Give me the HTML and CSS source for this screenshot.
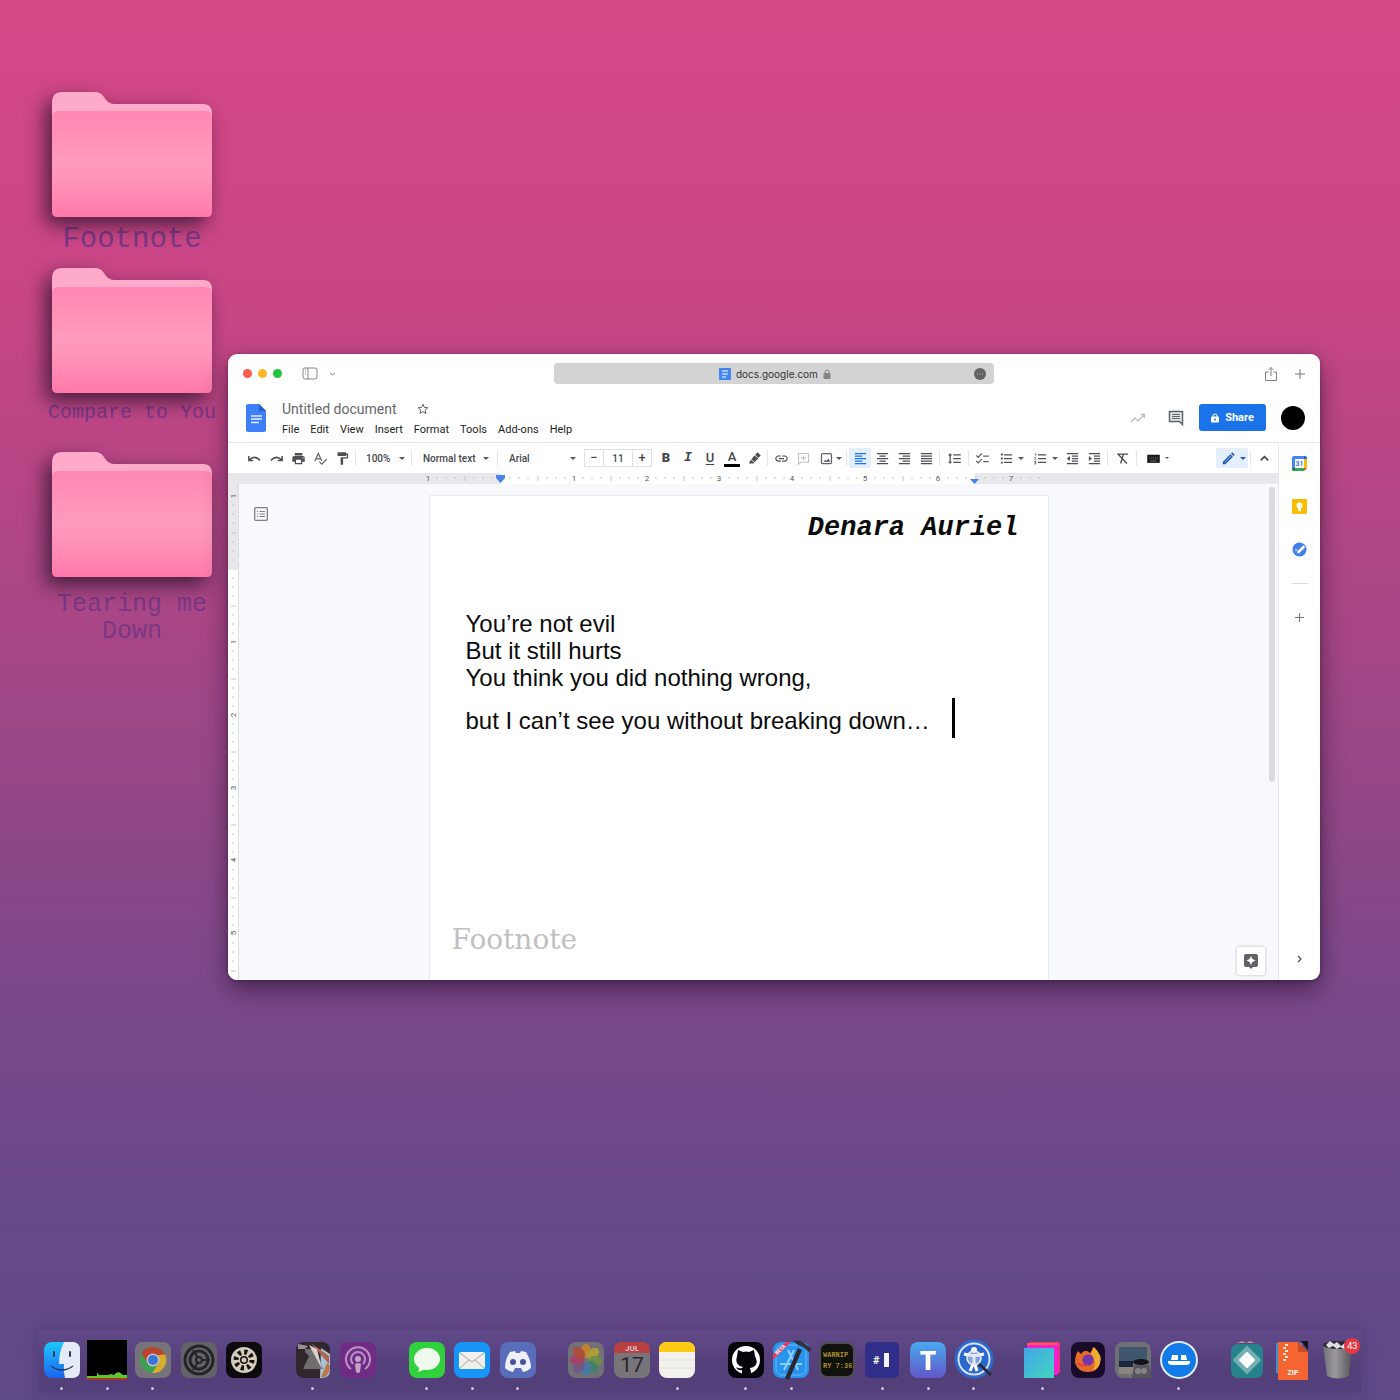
FILE: index.html
```html
<!DOCTYPE html>
<html lang="en">
<head>
<meta charset="utf-8">
<title>Desktop</title>
<meta name="viewport" content="width=device-width, initial-scale=1">
<link rel="stylesheet" href="styles.css">
</head>
<body>
<svg class="defs" width="0" height="0" aria-hidden="true">
  <defs>
    <linearGradient id="front" x1="0" y1="0" x2="0" y2="1"><stop offset="0" stop-color="#ff87b3"/><stop offset=".48" stop-color="#ff9abe"/><stop offset=".65" stop-color="#ff94ba"/><stop offset="1" stop-color="#ff79aa"/></linearGradient>
    <symbol id="folder" viewBox="0 0 160 125">
      <path d="M0 11Q0 0 10 0H43Q49 0 52 5Q56 12 62 12H151Q160 12 160 21V60H0Z" fill="#ffa9cb"/>
      <path d="M0 25Q0 19 7 19H153Q160 19 160 25V120Q160 125 155 125H5Q0 125 0 120Z" fill="url(#front)"/>
    </symbol>
    <pattern id="ticks-h" x="0" y="0" width="73" height="11" patternUnits="userSpaceOnUse">
      <path d="M9 4v2M18 4v2M27 4v2M37 3v5M46 4v2M55 4v2M64 4v2" stroke="#c3c6ca" fill="none"/>
    </pattern>
    <pattern id="ticks-v" x="0" y="12" width="10" height="73" patternUnits="userSpaceOnUse">
      <path d="M4 9h2M4 18h2M4 27h2M3 37h5M4 46h2M4 55h2M4 64h2" stroke="#c3c6ca" fill="none"/>
    </pattern>
  </defs>
</svg>
<main class="desktop">
  <nav class="folders" aria-label="Folders">
    <a class="folder" href="#footnote"><svg class="folder-icon"><use href="#folder"/></svg><span class="folder-label large">Footnote</span></a>
    <a class="folder" href="#compare"><svg class="folder-icon"><use href="#folder"/></svg><span class="folder-label small">Compare to You</span></a>
    <a class="folder" href="#tearing"><svg class="folder-icon"><use href="#folder"/></svg><span class="folder-label medium">Tearing me Down</span></a>
  </nav>

  <section class="window" aria-label="Document window">
    <header class="titlebar">
      <div class="bar-left">
        <button class="light red" aria-label="Close"></button>
        <button class="light yellow" aria-label="Minimize"></button>
        <button class="light green" aria-label="Zoom"></button>
        <button class="plain sidebar-btn" aria-label="Sidebar"><svg width="16" height="13" viewBox="0 0 16 13" fill="none" stroke="#858585"><rect x="1" y="1" width="14" height="11" rx="2"/><path d="M6 1v11M3 3h1M3 5h1M3 7h1"/></svg></button>
        <button class="plain" aria-label="Tab groups"><svg width="8" height="6" viewBox="0 0 8 6" fill="none" stroke="#888"><path d="M2 2l2.500 2L7 2"/></svg></button>
      </div>
      <div class="address">
        <svg width="12" height="12" viewBox="0 0 12 12"><rect width="12" height="12" rx="1" fill="#4285f4"/><path d="M3 3h6M3 6h6M3 9h4" stroke="#fff"/></svg>
        <input class="url" aria-label="Address" value="docs.google.com">
        <svg width="8" height="10" viewBox="0 0 8 10"><rect x="0.500" y="4" width="7" height="6" rx="1" fill="#858585"/><path d="M2 5V3q0-2 2-2t2 2v2" stroke="#858585" fill="none"/></svg>
        <button class="plain more" aria-label="More"><svg width="12" height="12" viewBox="0 0 12 12"><circle cx="6" cy="6" r="6" fill="#626262"/><path d="M3 6h1M5.500 6h1M8 6h1" stroke="#bbb"/></svg></button>
      </div>
      <div class="bar-right">
        <button class="plain" aria-label="Share page"><svg width="14" height="16" viewBox="0 0 14 16" fill="none" stroke="#808080"><path d="M4.500 6H1.500v8.500h11V6H9.500M7 10V1.500M4.500 4L7 1.500 9.500 4"/></svg></button>
        <button class="plain" aria-label="New tab"><svg width="12" height="12" viewBox="0 0 12 12" stroke="#777"><path d="M6 1v10M1 6h10"/></svg></button>
      </div>
    </header>

    <div class="doc-header">
      <svg class="docs-logo" width="20" height="28" viewBox="0 0 20 28"><path d="M2 0H13L20 7V26q0 2-2 2H2q-2 0-2-2V2Q0 0 2 0Z" fill="#3d7ff8"/><path d="M13 0l7 7h-7z" fill="#1f5fc4"/><path d="M5 12h11M5 15h11M5 18.500h8" stroke="#e4edff" stroke-width="1.600"/></svg>
      <div class="doc-names">
        <div class="title-row">
          <input class="doc-title" aria-label="Title" value="Untitled document">
          <button class="plain" aria-label="Star"><svg width="12" height="12" viewBox="0 0 12 12" fill="none" stroke="#5f6368"><path d="M6 1.200l1.400 3.200 3.500.3-2.700 2.300.8 3.500-3-1.900-3 1.900.8-3.500L1.100 4.700l3.500-.3z"/></svg></button>
        </div>
        <nav class="menus" aria-label="Menu">
          <button>File</button><button>Edit</button><button>View</button><button>Insert</button><button>Format</button><button>Tools</button><button>Add-ons</button><button>Help</button>
        </nav>
      </div>
      <div class="doc-actions">
        <button class="plain" aria-label="Activity"><svg width="16" height="12" viewBox="0 0 16 12" fill="none" stroke="#bdbfc2" stroke-width="1.300"><path d="M1 10l4-4 3 3 6-6M11 2.500h3.500V6"/></svg></button>
        <button class="plain comments" aria-label="Comments"><svg width="16" height="16" viewBox="0 0 16 16"><path d="M1.500 1.500h13v13l-3-3h-10z" fill="#e6e7e8" stroke="#5f6368" stroke-width="1.500"/><path d="M4 4.500h8M4 6.500h8M4 8.500h8" stroke="#5f6368"/></svg></button>
        <button class="share"><svg width="8" height="10" viewBox="0 0 8 10"><rect y="3.500" width="8" height="6" rx="1" fill="#fff"/><path d="M2 4V3q0-2 2-2t2 2v1" stroke="#fff" fill="none"/><circle cx="4" cy="6.500" r="1" fill="#1a73e8"/></svg>Share</button>
        <button class="avatar" aria-label="Account"></button>
      </div>
    </div>

    <div class="workspace">
      <div class="editor">
        <div class="toolbar" role="toolbar" aria-label="Formatting">
          <button class="tool" aria-label="Undo"><svg class="ico" viewBox="0 0 24 24"><path d="M3 8v7h7M4 14q8-8 17 1" fill="none" stroke="#4c4f53" stroke-width="2.400"/></svg></button>
          <button class="tool" aria-label="Redo"><svg class="ico" viewBox="0 0 24 24"><path d="M21 8v7h-7M20 14q-8-8-17 1" fill="none" stroke="#4c4f53" stroke-width="2.400"/></svg></button>
          <button class="tool" aria-label="Print"><svg class="ico" viewBox="0 0 24 24"><path d="M19 8H5c-1.660 0-3 1.340-3 3v6h4v4h12v-4h4v-6c0-1.660-1.340-3-3-3zm-3 11H8v-5h8v5zm3-7c-.55 0-1-.45-1-1s.45-1 1-1 1 .45 1 1-.45 1-1 1zm-1-9H6v4h12V3z"/></svg></button>
          <button class="tool" aria-label="Spelling"><svg class="ico" viewBox="0 0 24 24"><path d="M3 16L8.500 4 14 16M5 12.500h7M10 17l4 4 8-8" fill="none" stroke="#5f6368" stroke-width="2"/></svg></button>
          <button class="tool" aria-label="Paint format"><svg class="ico" viewBox="0 0 24 24"><path d="M18 4V3c0-.55-.45-1-1-1H5c-.55 0-1 .45-1 1v4c0 .55.45 1 1 1h12c.55 0 1-.45 1-1V6h1v4H9v11c0 .55.45 1 1 1h2c.55 0 1-.45 1-1v-9h8V4h-3z"/></svg></button>
          <i class="sep"></i>
          <label class="picker zoom"><select aria-label="Zoom"><option>100%</option></select></label>
          <i class="sep"></i>
          <label class="picker style"><select aria-label="Style"><option>Normal text</option></select></label>
          <i class="sep"></i>
          <label class="picker font"><select aria-label="Font"><option>Arial</option></select></label>
          <div class="size-box"><button aria-label="Smaller">−</button><input aria-label="Font size" value="11"><button aria-label="Larger">+</button></div>
          <button class="tool letter bold">B</button>
          <button class="tool letter italic">I</button>
          <button class="tool letter underline">U</button>
          <button class="tool letter color">A</button>
          <button class="tool" aria-label="Highlight"><svg class="ico" viewBox="0 0 24 24"><path d="M3 20l3-6 6 5-2 1zM7 13l5-6 6 5-6 6zM13 6l4-4 5 5-4 4z"/></svg></button>
          <i class="sep"></i>
          <button class="tool" aria-label="Link"><svg class="ico" viewBox="0 0 24 24"><path d="M3.900 12c0-1.710 1.390-3.100 3.100-3.100h4V7H7c-2.760 0-5 2.240-5 5s2.240 5 5 5h4v-1.900H7c-1.710 0-3.100-1.390-3.100-3.100zM8 13h8v-2H8v2zm9-6h-4v1.900h4c1.710 0 3.100 1.390 3.100 3.100s-1.390 3.100-3.100 3.100h-4V17h4c2.760 0 5-2.240 5-5s-2.240-5-5-5z"/></svg></button>
          <button class="tool" aria-label="Add comment"><svg class="ico" viewBox="0 0 24 24"><path d="M4 4h16v14H8l-4 3zM12 7v8M8 11h8" fill="none" stroke="#c0c2c5" stroke-width="1.800"/></svg></button>
          <button class="tool drop narrow" aria-label="Image"><svg class="ico" viewBox="0 0 24 24"><rect x="4" y="4" width="16" height="16" rx="2" fill="none" stroke="#5f6368" stroke-width="2"/><path d="M7 17l3-3 2 2 3-4 3 5z"/></svg></button>
          <i class="sep"></i>
          <button class="tool active" aria-label="Align left"><svg class="ico" viewBox="0 0 24 24"><path d="M3 3h18v2H3zM3 7h12v2H3zM3 11h18v2H3zM3 15h12v2H3zM3 19h18v2H3z"/></svg></button>
          <button class="tool" aria-label="Align center"><svg class="ico" viewBox="0 0 24 24"><path d="M3 3h18v2H3zM7 7h10v2H7zM3 11h18v2H3zM7 15h10v2H7zM3 19h18v2H3z"/></svg></button>
          <button class="tool" aria-label="Align right"><svg class="ico" viewBox="0 0 24 24"><path d="M3 3h18v2H3zM9 7h12v2H9zM3 11h18v2H3zM9 15h12v2H9zM3 19h18v2H3z"/></svg></button>
          <button class="tool" aria-label="Justify"><svg class="ico" viewBox="0 0 24 24"><path d="M3 3h18v2H3zM3 7h18v2H3zM3 11h18v2H3zM3 15h18v2H3zM3 19h18v2H3z"/></svg></button>
          <i class="sep"></i>
          <button class="tool wide" aria-label="Line spacing"><svg class="ico" viewBox="0 0 24 24"><path d="M6 7h2.500L5 3.500 1.500 7H4v10H1.500L5 20.500 8.500 17H6V7zm4-2v2h12V5H10zm0 14h12v-2H10v2zm0-6h12v-2H10v2z"/></svg></button>
          <i class="sep"></i>
          <button class="tool" aria-label="Checklist"><svg class="ico" viewBox="0 0 24 24"><path d="M2 7l3 3 6-6M2 16l3 3 6-6M13 8h9M13 17h9" fill="none" stroke="#5f6368" stroke-width="2"/></svg></button>
          <button class="tool drop" aria-label="Bulleted list"><svg class="ico" viewBox="0 0 24 24"><path d="M3 4h3v3H3zM3 10.500h3v3H3zM3 17h3v3H3zM8 5h13v2H8zM8 11h13v2H8zM8 17h13v2H8z"/></svg></button>
          <button class="tool drop" aria-label="Numbered list"><svg class="ico" viewBox="0 0 24 24"><path d="M3 4h2v4H4V5H3zM2 10h3v1l-2 2h2v1H2v-1l2-2H2zM2 16h3v5H2v-1h2v-1H3v-1h1v-1H2zM8 5h13v2H8zM8 11h13v2H8zM8 17h13v2H8z"/></svg></button>
          <button class="tool" aria-label="Decrease indent"><svg class="ico" viewBox="0 0 24 24"><path d="M3 3h18v2H3zM11 7h10v2H11zM11 11h10v2H11zM11 15h10v2H11zM3 19h18v2H3zM3 12l5-4v8z"/></svg></button>
          <button class="tool" aria-label="Increase indent"><svg class="ico" viewBox="0 0 24 24"><path d="M3 3h18v2H3zM11 7h10v2H11zM11 11h10v2H11zM11 15h10v2H11zM3 19h18v2H3zM8 12L3 8v8z"/></svg></button>
          <i class="sep"></i>
          <button class="tool wide" aria-label="Clear formatting"><svg class="ico" viewBox="0 0 24 24"><path d="M6 5h15M13.500 5L9 20M4 4l15 16" fill="none" stroke="#4c4f53" stroke-width="2.200"/></svg></button>
          <i class="sep"></i>
          <button class="tool drop faint" aria-label="Input tools"><svg class="ico" viewBox="0 0 24 24"><rect x="2" y="6" width="20" height="13" fill="#161616"/><path d="M5 10h14M5 12.500h14" stroke="#777" stroke-dasharray="2 1"/><path d="M7 16h10" stroke="#aaa"/></svg></button>
          <button class="tool mode" aria-label="Editing mode"><svg class="ico" viewBox="0 0 24 24"><path d="M3 21v-4L15 5l4 4L7 21zM16 4l2-2 4 4-2 2z"/><path d="M6 18L16 8" stroke="#8ab4f8" stroke-width="1.500"/></svg></button>
          <i class="sep"></i>
          <button class="tool" aria-label="Hide menus"><svg class="ico" viewBox="0 0 24 24"><path d="M6 15l6-6 6 6" fill="none" stroke="#444" stroke-width="2.400"/></svg></button>
        </div>

        <div class="ruler-row">
          <svg class="ruler" width="620" height="11" viewBox="0 0 620 11">
            <rect x="73" width="474" height="11" fill="#fff"/>
            <rect width="620" height="11" fill="url(#ticks-h)"/>
            <g class="ruler-num"><text x="0" y="8">1</text><text x="146" y="8">1</text><text x="219" y="8">2</text><text x="291" y="8">3</text><text x="364" y="8">4</text><text x="437" y="8">5</text><text x="510" y="8">6</text><text x="583" y="8">7</text></g>
            <path d="M68 2h9v3l-4.500 5L68 5z" fill="#4a80ee"/><path d="M542 6h9l-4.500 5z" fill="#4a80ee"/>
          </svg>
        </div>

        <div class="stage">
          <svg class="ruler-v" width="10" height="496" viewBox="0 0 10 496">
            <rect width="10" height="496" fill="#fff"/><rect width="10" height="86" fill="#e8e8eb"/>
            <rect y="12" width="10" height="484" fill="url(#ticks-v)"/>
            <g class="ruler-num"><text transform="translate(8 12) rotate(-90)">1</text><text transform="translate(8 158) rotate(-90)">1</text><text transform="translate(8 231) rotate(-90)">2</text><text transform="translate(8 304) rotate(-90)">3</text><text transform="translate(8 376) rotate(-90)">4</text><text transform="translate(8 449) rotate(-90)">5</text></g>
          </svg>
          <div class="canvas">
            <div class="outline">
              <button class="plain" aria-label="Outline"><svg width="14" height="14" viewBox="0 0 14 14" fill="none" stroke="#7d8187"><rect x=".7" y=".7" width="12.600" height="12.600" rx="1" stroke-width="1.300"/><path d="M3 4.500h1M3 7h1M3 9.500h1M5.500 4.500H11M5.500 7H11M5.500 9.500H11"/></svg></button>
            </div>
            <article class="paper">
              <p class="byline">Denara Auriel</p>
              <div class="verse">
                <p>You’re not evil</p>
                <p>But it still hurts</p>
                <p>You think you did nothing wrong,</p>
                <p class="last">but I can’t see you without breaking down…<span class="cursor"></span></p>
              </div>
              <p class="footnote">Footnote</p>
            </article>
            <div class="gutter">
              <span class="scrollbar"></span>
              <button class="explore" aria-label="Explore"><svg width="16" height="16" viewBox="0 0 16 16"><path d="M3 1h10q2 0 2 2v9q0 2-2 2h-3l-2 2-2-2H3q-2 0-2-2V3q0-2 2-2Z" fill="#5f6368"/><path d="M8 3l1.400 3.100L12.500 7.500 9.400 8.900 8 12 6.600 8.900 3.500 7.500 6.600 6.100Z" fill="#fff"/></svg></button>
            </div>
          </div>
        </div>
      </div>

      <aside class="sidepanel" aria-label="Side panel">
        <button class="plain" aria-label="Calendar"><svg width="15" height="15" viewBox="0 0 15 15"><path d="M0 12V2Q0 0 2 0h10v3H3v9z" fill="#4285f4"/><path d="M12 3h3v9h-3z" fill="#fbbc04"/><path d="M12 0h1q2 0 2 2v1h-3z" fill="#1967d2"/><path d="M3 12h9v3H3z" fill="#34a853"/><path d="M0 12h3v3H2q-2 0-2-2z" fill="#188038"/><path d="M12 12h3l-3 3z" fill="#ea4335"/><path d="M3 3h9v9H3z" fill="#fff"/><text x="7.500" y="10" class="cal-day">31</text></svg></button>
        <button class="plain" aria-label="Keep"><svg width="15" height="15" viewBox="0 0 15 15"><rect width="15" height="15" rx="1" fill="#fbbc04"/><circle cx="7.500" cy="6.500" r="3" fill="#fff"/><path d="M6 9h3v3H6z" fill="#fff"/></svg></button>
        <button class="plain" aria-label="Tasks"><svg width="15" height="15" viewBox="0 0 15 15"><circle cx="7.500" cy="7.500" r="7" fill="#4080ed"/><path d="M6.500 10l5-5" stroke="#fff" stroke-width="2.600" stroke-linecap="round"/><circle cx="4" cy="8" r="1.200" fill="#a9c7fa"/></svg></button>
        <hr>
        <button class="plain" aria-label="Get add-ons"><svg width="11" height="11" viewBox="0 0 11 11" stroke="#757575"><path d="M5.500 1v9M1 5.500h9"/></svg></button>
        <button class="plain collapse" aria-label="Hide side panel"><svg width="8" height="10" viewBox="0 0 8 10" fill="none" stroke="#555" stroke-width="1.300"><path d="M2 2l3 3-3 3"/></svg></button>
      </aside>
    </div>
  </section>

  <nav class="dock" aria-label="Dock">
    <button class="app open" aria-label="Finder"><svg viewBox="0 0 40 40"><defs><linearGradient id="fin" x2="0" y2="1"><stop stop-color="#1ec8fb"/><stop offset="1" stop-color="#1b64ee"/></linearGradient></defs><rect x="2" y="2" width="36" height="36" rx="8" fill="url(#fin)"/><path d="M22 2h8q8 0 8 8v20q0 8-8 8h-7q-2-7-1-14h-5q0-12 5-22z" fill="#e6e9f6"/><path d="M12 12v4M28 12v4" stroke="#273a5a" stroke-width="2" stroke-linecap="round"/><path d="M9 26q11 8 22 0" fill="none" stroke="#233656" stroke-width="1.500"/></svg></button>
    <button class="app open" aria-label="Activity"><svg viewBox="0 0 40 40"><rect width="40" height="40" fill="#000"/><path d="M0 38v-2h10v-4l2 3h9l3-1 3 1 2-2 3-1 4 3h4v3z" fill="#62c42c"/><path d="M0 39h40" stroke="#e54834" stroke-width="1.500"/></svg></button>
    <button class="app open" aria-label="Chrome"><svg viewBox="0 0 40 40"><rect x="2" y="2" width="36" height="36" rx="8" fill="#77737b"/><circle cx="20" cy="20" r="13" fill="#3ba052"/><path d="M8.500 14A13 13 0 0 1 32 15H20L14 22z" fill="#b9432f"/><path d="M32 14.500A13 13 0 0 1 19 33l7-10-1-8z" fill="#d9ad2b"/><circle cx="20" cy="20" r="6.500" fill="#c5c5d2"/><circle cx="20" cy="20" r="5" fill="#3975d5"/></svg></button>
    <button class="app" aria-label="System Preferences"><svg viewBox="0 0 40 40"><rect x="2" y="2" width="36" height="36" rx="8" fill="#646368"/><g fill="none" stroke="#252529"><circle cx="20" cy="20" r="14" stroke-width="3"/><circle cx="20" cy="20" r="9" stroke-width="3"/><circle cx="20" cy="20" r="3" stroke-width="2"/><path d="M22 20h9M19 18l-5-8M19 22l-5 8" stroke-width="2"/></g></svg></button>
    <button class="app" aria-label="Aperture"><svg viewBox="0 0 40 40"><rect x="2" y="2" width="36" height="36" rx="8" fill="#0d090d"/><circle cx="20" cy="20" r="13" fill="#d3cbbb"/><circle cx="20" cy="20" r="8" fill="none" stroke="#15100f" stroke-width="5" stroke-dasharray="3 3.280"/><circle cx="20" cy="20" r="4" fill="#15100f"/><circle cx="20" cy="20" r="2.500" fill="#d3cbbb"/></svg></button>
    <i class="space"></i>
    <button class="app open" aria-label="Photo editor"><svg viewBox="0 0 40 40"><rect x="3" y="2" width="34" height="36" rx="8" fill="#30262d"/><path d="M28 8l9 6v16q0 8-8 8h-2z" fill="#a8c3d2"/><path d="M18 3l18 13v8L22 8z" fill="#ad6350"/><path d="M34 23l-6 14h4q5-4 5-11z" fill="#bb7650"/><path d="M12 9h10l8 20H10l6-13-4-4z" fill="#716c70"/><path d="M16 5l8 4 5 20z" fill="#d9cfcd"/><path d="M5 4l10 2-3 3H5z" fill="#9b8f94"/></svg></button>
    <button class="app" aria-label="Podcasts"><svg viewBox="0 0 40 40"><rect x="2" y="2" width="36" height="36" rx="8" fill="#702b85"/><g fill="none" stroke="#b893c3" stroke-width="2"><path d="M13 29a12 12 0 1 1 14 0M15 24a7 7 0 1 1 10 0"/></g><circle cx="20" cy="19" r="3" fill="#c3a4cb"/><path d="M17 24q3-2 6 0l-1 8q-2 2-4 0z" fill="#c3a4cb"/></svg></button>
    <i class="space"></i>
    <button class="app open" aria-label="Messages"><svg viewBox="0 0 40 40"><rect x="2" y="2" width="36" height="36" rx="8" fill="#31d13e"/><ellipse cx="20" cy="19" rx="13" ry="11" fill="#eff8ed"/><path d="M13 26l-2 6 8-3z" fill="#eff8ed"/></svg></button>
    <button class="app open" aria-label="Mail"><svg viewBox="0 0 40 40"><rect x="2" y="2" width="36" height="36" rx="8" fill="#1695f7"/><rect x="7" y="12" width="26" height="17" rx="2" fill="#f2efec"/><path d="M8 13l12 9 12-9M8 28l9-8M32 28l-9-8" fill="none" stroke="#aaa5a6"/></svg></button>
    <button class="app open" aria-label="Discord"><svg viewBox="0 0 40 40"><rect x="2" y="2" width="36" height="36" rx="8" fill="#596dba"/><path d="M12 12l5-1 1 2h4l1-2 5 1q5 8 5 16-3 3-8 4l-2-4h-6l-2 4q-5-1-8-4 0-9 5-16z" fill="#eef0fa"/><circle cx="15" cy="22" r="3" fill="#4a5298"/><circle cx="25" cy="22" r="3" fill="#4a5298"/></svg></button>
    <i class="space"></i>
    <button class="app" aria-label="Photos"><svg viewBox="0 0 40 40"><rect x="2" y="2" width="36" height="36" rx="8" fill="#737078"/><g opacity=".85"><ellipse cx="20" cy="11" rx="5" ry="7" fill="#cb8726"/><ellipse cx="27" cy="14" rx="5" ry="7" fill="#b7a32b" transform="rotate(45 27 14)"/><ellipse cx="29" cy="21" rx="7" ry="5" fill="#6d963b"/><ellipse cx="26" cy="27" rx="5" ry="7" fill="#3a856d" transform="rotate(-45 26 27)"/><ellipse cx="20" cy="29" rx="5" ry="7" fill="#3f7ca8"/><ellipse cx="13" cy="27" rx="5" ry="7" fill="#715488" transform="rotate(45 13 27)"/><ellipse cx="11" cy="20" rx="7" ry="5" fill="#ac3c6b"/><ellipse cx="13" cy="13" rx="5" ry="7" fill="#b84834" transform="rotate(-45 13 13)"/></g></svg></button>
    <button class="app" aria-label="Calendar"><svg viewBox="0 0 40 40"><rect x="2" y="2" width="36" height="36" rx="8" fill="#77747a"/><path d="M2 13v-3q0-8 8-8h20q8 0 8 8v3z" fill="#b83f42"/><text class="month" x="20" y="11">JUL</text><text class="date" x="20" y="32">17</text></svg></button>
    <button class="app open" aria-label="Notes"><svg viewBox="0 0 40 40"><rect x="2" y="2" width="36" height="36" rx="8" fill="#f3f1ec"/><path d="M2 12v-2q0-8 8-8h20q8 0 8 8v2z" fill="#fccb16"/><path d="M2 20h36M2 28h36" stroke="#e2e0dc"/></svg></button>
    <i class="space"></i>
    <button class="app open" aria-label="GitHub"><svg viewBox="0 0 40 40"><rect x="2" y="2" width="36" height="36" rx="8" fill="#05060c"/><circle cx="20" cy="20" r="14" fill="#fff"/><path d="M12 10l5 2q3-1 6 0l5-2 1 6q5 10-5 12 1 2 1 7H16v-5q-4 1-6-3 3 2 6 1l1-1q-9-2-6-11z" fill="#05060c"/></svg></button>
    <button class="app open" aria-label="Xcode"><svg viewBox="0 0 40 40"><rect x="2" y="2" width="36" height="36" rx="8" fill="#2894ed"/><path d="M13 30l10-20M17 10l10 20M9 24h22" fill="none" stroke="#8bd0ff" stroke-width="2"/><rect x="5" y="5" width="30" height="30" rx="6" fill="none" stroke="#69b9f8"/><path d="M14 38L27 8l4 2L18 40z" fill="#292932"/><path d="M22 1q8-2 13 4l6 4-3 3-6-5q-6-2-10-6z" fill="#30313a"/><path d="M2 14L15 2h5L2 20z" fill="#e63963"/><text class="beta" transform="translate(6 15) rotate(-42)">BETA</text></svg></button>
    <button class="app" aria-label="Console"><svg viewBox="0 0 40 40"><rect x="3" y="3" width="34" height="34" rx="7" fill="#11110d" stroke="#4e4d55" stroke-width="2"/><text class="led" x="6" y="17">WARNIP</text><text class="led" x="6" y="28">RY 7:36</text></svg></button>
    <button class="app open" aria-label="Counter"><svg viewBox="0 0 40 40"><rect x="3" y="2" width="34" height="36" rx="5" fill="#302e89"/><text class="hash" x="11" y="24">#</text><path d="M22 13h5v14h-5z" fill="#f4f4ff"/></svg></button>
    <button class="app open" aria-label="Text tool"><svg viewBox="0 0 40 40"><defs><linearGradient id="tee" x2="0" y2="1"><stop stop-color="#49a9ef"/><stop offset="1" stop-color="#6357ca"/></linearGradient></defs><rect x="2" y="2" width="36" height="36" rx="8" fill="url(#tee)"/><text class="tee" x="20" y="30">T</text></svg></button>
    <button class="app open" aria-label="Inspector"><svg viewBox="0 0 40 40"><circle cx="20" cy="19" r="19.500" fill="#2e68c8"/><circle cx="20" cy="19" r="15.500" fill="#2b68ce" stroke="#d7e1fa" stroke-width="2"/><circle cx="20" cy="10" r="3" fill="#fff"/><path d="M10 14q10 3 20 0M20 15v8M20 22l-4 9M20 22l3 9" stroke="#fff" stroke-width="3" fill="none"/><circle cx="20" cy="18" r="7" fill="#c8d2e9" fill-opacity=".55" stroke="#eee" stroke-width="1.500"/><path d="M25 24l12 11" stroke="#252936" stroke-width="3"/></svg></button>
    <i class="space"></i>
    <button class="app open" aria-label="Layers"><svg viewBox="0 0 40 40"><defs><linearGradient id="lay" x2="1" y2="1"><stop stop-color="#45a5e8"/><stop offset="1" stop-color="#40d5bf"/></linearGradient></defs><path d="M7 2h31v31h-3z" fill="#e92f86"/><path d="M5 5h31v30H5z" fill="#f61ed1"/><path d="M5 3h31v2H5z" fill="#f65f42"/><path d="M2 8h30v30H2z" fill="url(#lay)"/></svg></button>
    <button class="app" aria-label="Firefox"><svg viewBox="0 0 40 40"><rect x="3" y="2" width="34" height="36" rx="8" fill="#180b29"/><path d="M10 11l3 3q4-6 9-1 2-2 3-6 9 8 7 16-2 9-12 9T7 23q0-8 3-12z" fill="#e36a28"/><path d="M23 13l3-6q9 9 6 16-2 6-7 7 5-7-2-17z" fill="#efae33"/><circle cx="20" cy="20" r="5.500" fill="#7136b0"/><path d="M8 22q7 4 13 2-7 6-13-2z" fill="#d53d42"/></svg></button>
    <button class="app" aria-label="Preview"><svg viewBox="0 0 40 40"><rect x="2" y="2" width="36" height="36" rx="8" fill="#706f76"/><path d="M6 7h28v16H6z" fill="#3f566d"/><path d="M6 21h14v6H6z" fill="#18273b"/><path d="M6 27h28v7H6z" fill="#8b847f"/><path d="M21 25h15l3 13H19z" fill="#57555b"/><ellipse cx="28" cy="22" rx="8" ry="3" fill="#111317"/><circle cx="25" cy="31" r="3" fill="#83828a"/><circle cx="31" cy="31" r="3" fill="#83828a"/></svg></button>
    <button class="app open" aria-label="Meeting"><svg viewBox="0 0 40 40"><circle cx="20" cy="20" r="19" fill="#e0ebfb"/><circle cx="20" cy="20" r="17" fill="#127be7"/><path d="M9 21h22v1q0 3-4 3H13q-4 0-4-3zM13 15h6v5h-7zM22 15h5l1 5h-6z" fill="#fff"/></svg></button>
    <i class="space"></i>
    <button class="app" aria-label="Patterns"><svg viewBox="0 0 40 40"><path d="M10 3l5-2 4 2 4-2 5 2z" fill="#bd8b9b"/><rect x="4" y="4" width="32" height="34" rx="7" fill="#26828b"/><path d="M20 7l13 13-13 13L7 20z" fill="#73b0b3" stroke="#73b0b3" stroke-width="2" stroke-linejoin="round"/><path d="M20 13l7 7-7 7-7-7z" fill="#fff" stroke="#fff" stroke-width="2" stroke-linejoin="round"/></svg></button>
    <button class="app" aria-label="Archive"><svg viewBox="0 0 40 40"><path d="M3 3h26v30H3z" fill="#3c94ce"/><path d="M28 1h7v9z" fill="#18131e"/><path d="M5 2h20l10 10v28H5z" fill="#f46532"/><path d="M25 2l10 10H25z" fill="#c94b24"/><path d="M12 4h3v2h-3zM10 7h3v2h-3zM12 10h3v2h-3zM10 13h3v2h-3zM12 16h3v2h-3zM10 19h3v2h-3z" fill="#ffe1d0"/><text class="zip" x="20" y="35">ZIP</text></svg></button>
    <button class="app" aria-label="Trash"><svg viewBox="0 0 40 40"><defs><linearGradient id="can"><stop stop-color="#727077"/><stop offset=".4" stop-color="#9b999e"/><stop offset="1" stop-color="#515057"/></linearGradient></defs><path d="M5 4h30l-4 32q-11 5-22 0z" fill="url(#can)"/><ellipse cx="20" cy="5" rx="15" ry="4" fill="#2c2a33"/><path d="M8 5l4-4 4 3 3-2 4 4 4-3 3 3-4 3-4-2-3 2-4-3-4 2z" fill="#dddddf"/></svg><span class="badge">43</span></button>
  </nav>
</main>
</body>
</html>
```

FILE: styles.css
```css
* { box-sizing: border-box; }

body {
  margin: 0;
  font-family: Roboto, "Liberation Sans", sans-serif;
}

button, input, select {
  margin: 0;
  padding: 0;
  border: 0;
  background: none;
  color: inherit;
  font: inherit;
}

p { margin: 0; }
svg { display: block; }
.defs { position: absolute; }

.desktop {
  position: relative;
  display: flex;
  flex-direction: column;
  justify-content: space-between;
  min-height: 100vh;
  background: linear-gradient(#d54886 0%, #c94686 21%, #a64685 46%, #80488a 68%, #674888 86%, #5f4a8a 100%);
}

/* folders */
.folders {
  display: flex;
  flex-direction: column;
  gap: 11px;
  width: 200px;
  margin-left: 32px;
  padding-top: 92px;
}

.folder {
  display: flex;
  flex-direction: column;
  align-items: center;
  gap: 6px;
  color: #7b3785;
  text-decoration: none;
  text-align: center;
}

.folder-icon {
  width: 160px;
  height: 125px;
  filter: drop-shadow(-6px 8px 10px rgba(20, 10, 30, .7));
}

.folder-label {
  font-family: "Liberation Mono", monospace;
  white-space: nowrap;
}
.large { font-size: 29px; line-height: 34px; }
.small { font-size: 20px; line-height: 28px; padding-bottom: 14px; }
.medium { width: 160px; padding-top: 8px; font-size: 25px; line-height: 27px; white-space: normal; }

/* window */
.window {
  position: absolute;
  top: 354px;
  left: 228px;
  right: 80px;
  overflow: hidden;
  border-radius: 9px;
  background: #fff;
  box-shadow: 0 10px 24px rgba(20, 5, 30, .5), 0 1px 4px rgba(20, 5, 30, .3);
}

.plain {
  display: flex;
  align-items: center;
  justify-content: center;
}

.titlebar {
  display: grid;
  grid-template-columns: 1fr minmax(0, 440px) 1fr;
  align-items: center;
  height: 39px;
}

.bar-left, .bar-right {
  display: flex;
  align-items: center;
}
.bar-left { gap: 6px; padding-left: 15px; }
.bar-right { justify-content: flex-end; gap: 16px; padding-right: 14px; }

.light { width: 9px; height: 9px; border-radius: 50%; }
.red { background: #fa5954; }
.yellow { background: #fdb92a; }
.green { background: #26c33c; }
.sidebar-btn { margin: 0 4px 0 14px; }

.address {
  display: flex;
  align-items: center;
  gap: 5px;
  height: 21px;
  padding: 0 8px 0 165px;
  border-radius: 4px;
  background: #d3d3d3;
}
.url {
  width: 82px;
  color: #333;
  font-family: Inter, sans-serif;
  font-size: 10px;
}
.more { margin-left: auto; }

.doc-header {
  display: flex;
  align-items: center;
  height: 50px;
  padding: 0 15px 0 18px;
  border-bottom: 1px solid #e3e4e6;
}
.doc-names { margin-left: 16px; }
.title-row { display: flex; align-items: center; gap: 15px; height: 22px; }
.doc-title { width: 120px; color: #64676b; font-size: 14px; }
.menus { display: flex; gap: 11px; height: 18px; padding-top: 1px; color: #1c1e21; font-size: 11px; }

.doc-actions { display: flex; align-items: center; margin-left: auto; }
.comments { margin: 0 15px 0 22px; }
.share {
  display: flex;
  align-items: center;
  justify-content: center;
  gap: 6px;
  width: 67px;
  height: 27px;
  border-radius: 3px;
  background: #1a73e8;
  color: #fff;
  font-size: 11px;
  font-weight: 700;
}
.avatar { width: 24px; height: 24px; margin-left: 15px; border-radius: 50%; background: #000; }

.workspace { display: flex; }
.editor { flex: 1; min-width: 0; }

/* toolbar */
.toolbar {
  display: flex;
  align-items: center;
  height: 30px;
  padding: 0 3px 0 15px;
  color: #44474b;
  font-size: 10px;
  font-weight: 500;
}
.sep { flex: none; width: 1px; height: 16px; margin: 0 2px; background: #e6e6e8; }
.tool {
  display: flex;
  flex: none;
  align-items: center;
  justify-content: center;
  width: 22px;
  height: 20px;
  border-radius: 2px;
}
.tool.wide { width: 24px; }
.ico { flex: none; width: 15px; height: 15px; fill: #4c4f53; }
.active { background: #e3effd; }
.active .ico { fill: #1a73e8; }

.drop, .mode { width: 34px; gap: 4px; padding-left: 2px; }
.narrow { width: 30px; gap: 2px; }
.mode { width: 32px; margin-left: auto; background: #e4effd; }
.mode .ico { fill: #2759ad; }
.drop::after, .mode::after, .picker::after {
  content: "";
  border: 3px solid transparent;
  border-top-color: #55585c;
  border-bottom: 0;
}
.mode::after { border-top-color: #2759ad; }
.faint::after { border-width: 2px 2px 0; }

.picker { display: flex; flex: none; align-items: center; padding: 0 4px 0 8px; }
.picker select { flex: 1; min-width: 0; appearance: none; }
.zoom { width: 51px; }
.style { width: 81px; padding-left: 9px; }
.style::after { margin-right: 2px; }
.font { width: 80px; padding-left: 9px; }

.size-box {
  display: flex;
  width: 68px;
  height: 18px;
  margin: 0 3px 0 4px;
  border: 1px solid #e0e1e3;
}
.size-box button { width: 18px; font-size: 13px; line-height: 14px; }
.size-box input { width: 30px; border: solid #e0e1e3; border-width: 0 1px; text-align: center; }

.letter { font-size: 13px; line-height: 16px; }
.bold { font-weight: 900; }
.italic { font-family: "Liberation Mono", monospace; font-style: italic; font-weight: 700; }
.underline { text-decoration: underline; text-underline-offset: 2px; }
.color { width: 16px; height: 17px; margin: 0 3px; border-bottom: 3px solid #000; border-radius: 0; line-height: 13px; }

/* rulers and page */
.ruler-row {
  display: flex;
  justify-content: center;
  height: 11px;
  padding: 0 40px 0 10px;
  background: #e8e8eb;
}
.ruler { overflow: visible; }
.ruler-num {
  fill: #55585c;
  font-size: 8px;
  text-anchor: middle;
}

.stage { display: flex; }
.ruler-v { flex: none; }
.canvas {
  display: grid;
  flex: 1;
  grid-template-columns: 1fr minmax(0, 620px) 1fr 40px;
  min-width: 0;
  border-left: 1px solid #dcdee1;
  background: #f7f9fc;
}
.outline { display: flex; align-items: flex-start; padding: 23px 0 0 15px; }
.paper {
  margin-top: 11px;
  padding: 16px 29px 20px 36px;
  border: 1px solid #e9ebee;
  border-bottom: 0;
  background: #fff;
  color: #0b0b0b;
}
.byline {
  font: italic 700 27px/32px "Liberation Mono", monospace;
  text-align: right;
}
.verse {
  padding-top: 66px;
  font-family: "Liberation Sans", Arial, sans-serif;
  font-size: 24px;
  line-height: 27px;
}
.last { display: flex; align-items: center; height: 41px; margin-top: 9px; }
.cursor { width: 3px; height: 40px; margin: 0 0 6px 22px; background: #000; }
.footnote {
  margin: 181px 0 0 -14px;
  color: #bfc0c2;
  font: 28px/36px "DejaVu Serif", serif;
}
.gutter {
  display: flex;
  flex-direction: column;
  grid-column: 4;
  align-items: flex-end;
  justify-content: space-between;
  padding: 3px 3px 5px 0;
}
.scrollbar { width: 6px; height: 295px; border-radius: 3px; background: #d9dbde; }
.explore {
  display: flex;
  align-items: center;
  justify-content: center;
  width: 28px;
  height: 28px;
  margin-right: 10px;
  border-radius: 2px;
  background: #fff;
  box-shadow: 0 0 3px rgba(60, 64, 67, .35);
}

.sidepanel {
  display: flex;
  flex: none;
  flex-direction: column;
  align-items: center;
  gap: 28px;
  width: 42px;
  padding: 13px 0 16px;
  border-left: 1px solid #e6e7e9;
}
.sidepanel hr { width: 16px; height: 1px; margin: -2px 0 0; border: 0; background: #dcdcdc; }
.sidepanel .collapse { margin-top: auto; }
.cal-day { fill: #3f78da; font-size: 7px; font-weight: 700; text-anchor: middle; }

/* dock */
.dock {
  display: flex;
  margin: 0 39px 8px;
  padding: 10px 0 0;
  background: linear-gradient(rgba(45, 32, 75, 0), rgba(45, 32, 75, .25) 60%);
  box-shadow: 0 0 20px rgba(45, 32, 75, .35);
}
.app {
  position: relative;
  display: flex;
  flex: 2 1 0;
  flex-direction: column;
  align-items: center;
  gap: 7px;
  min-width: 0;
  height: 52px;
}
.app svg { flex: none; width: 40px; height: 40px; overflow: visible; }
.app.open::after {
  content: "";
  width: 3px;
  height: 3px;
  border-radius: 50%;
  background: #cfc1e0;
}
.space { flex: 1 1 0; }
.badge {
  position: absolute;
  top: -2px;
  right: 1px;
  width: 16px;
  height: 16px;
  border-radius: 50%;
  background: #e63a43;
  color: #fff;
  font-size: 9px;
  line-height: 16px;
}
.month { fill: #dcc4c8; font-size: 8px; font-weight: 700; text-anchor: middle; }
.date { fill: #28262c; font-size: 21px; text-anchor: middle; }
.beta { fill: #fff; font-size: 5px; font-weight: 700; }
.led { fill: #a88f28; font-family: "Liberation Mono", monospace; font-size: 7px; font-weight: 700; }
.hash { fill: #fff; font-size: 11px; font-weight: 700; }
.tee { fill: #fff; font-size: 26px; font-weight: 900; text-anchor: middle; }
.zip { fill: #fff; font-size: 7px; font-weight: 700; text-anchor: middle; }
```
